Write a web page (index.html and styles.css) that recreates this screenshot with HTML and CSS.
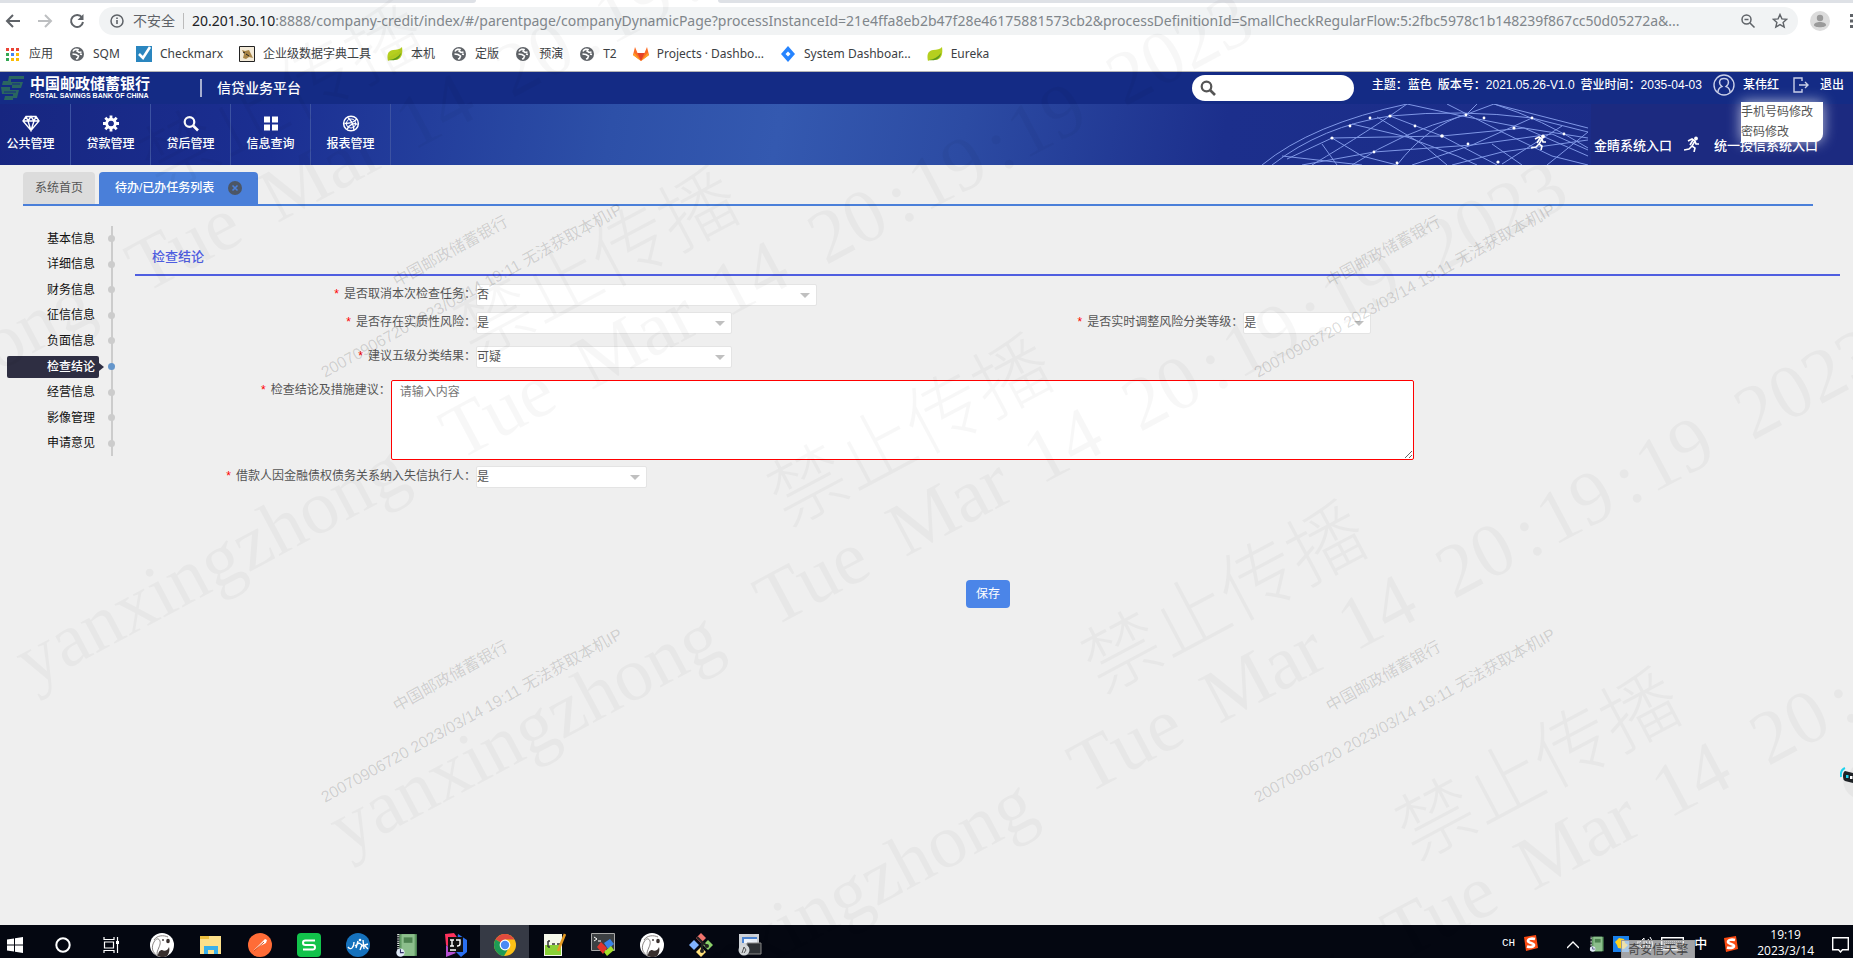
FILE: index.html
```html
<!DOCTYPE html>
<html lang="zh-CN">
<head>
<meta charset="utf-8">
<title>信贷业务平台</title>
<link rel="stylesheet" href="styles.css">
</head>
<body>
<svg class="defs" aria-hidden="true">
  <symbol id="globe" viewBox="0 0 16 16"><circle cx="8" cy="8" r="7" fill="#5f6368"/><path d="M4 5.500C5 3 8 3 9 3.500L8 5 10 6.500 12.500 6M3.500 8L7 8.500 9.500 10 8.500 12.500 7 13M11 8l2 .5" fill="none" stroke="#fff" stroke-width="1.600"/></symbol>
  <symbol id="leaf" viewBox="0 0 16 16"><path d="M15 1c1 6 0 13-7 13-3 0-5-.5-7 1C0 10 0 5 6 4c4-.6 7-.5 9-3z" fill="#b5cf1f"/><path d="M2 14c5-.5 9-3 12-7-1 6-5 8-12 7z" fill="#5c9a1d"/></symbol>
  <symbol id="search" viewBox="0 0 16 16"><circle cx="6.500" cy="6.500" r="4.800" fill="none" stroke="currentColor" stroke-width="2.200"/><path d="M10 10l5 5" stroke="currentColor" stroke-width="2.600"/></symbol>
  <symbol id="runner" viewBox="0 0 16 16"><circle cx="12" cy="2.500" r="1.900" fill="#fff"/><path d="M4 5l4-2 3 2-3 5 3 2-1 4M8 10l-3 3-5 1M11 5l1 3 3 0M9 4L6 9" fill="none" stroke="#fff" stroke-width="1.600"/></symbol>
  <symbol id="dog" viewBox="0 0 24 24"><circle cx="12" cy="12" r="12" fill="#fff"/><path d="M4 7C7 2 14 2 18 4" fill="none" stroke="#8a8482" stroke-width="1"/><path d="M4 9c2-4 5-4 6-1 1 4-2 7-3 12l1 3C2 20 1 14 4 9z" fill="#fff" stroke="#6b6462" stroke-width=".8"/><path d="M8 23c0-4 2-6 4-6 3 2 6 0 7-3 1 3 0 7-2 9-3 1.500-6 1.500-9 0z" fill="#382f2d"/><ellipse cx="18" cy="8" rx="1.800" ry="2.200" fill="#382f2d"/><circle cx="13" cy="7" r=".9" fill="#382f2d"/></symbol>
  <symbol id="sogou" viewBox="0 0 16 16"><path d="M1 2L13 0l2 13L3 16z" fill="#fb4a12"/><path d="M12 4C8 3 5 4 5 6s6 2 6 4-4 2.500-7 1.500" fill="none" stroke="#fff" stroke-width="2.600"/></symbol>
  <symbol id="book" viewBox="0 0 20 22"><path d="M3 1h16v20H3z" fill="#5f9a62"/><path d="M5 1h12v20H5z" fill="#8cbf8c"/><path d="M7 4h8v5H7z" fill="#4d8350"/><path d="M2 1v20" stroke="#dfe8df" stroke-width="2" stroke-dasharray="1 1"/><circle cx="4" cy="18" r="3.800" fill="#dfe9f5"/><path d="M4 15v3h3" fill="none" stroke="#336" stroke-width="1"/></symbol>
</svg>

<div class="browser">
  <div class="tabstrip"><span class="strip-left"></span><span class="strip-gap"></span><span class="strip-right"></span></div>
  <div class="toolbar">
    <button class="tool" aria-label="后退"><svg viewBox="0 0 16 16" width="16" height="16"><path d="M15 8H2M8 2L2 8l6 6" fill="none" stroke="#5f6368" stroke-width="2"/></svg></button>
    <button class="tool" aria-label="前进"><svg viewBox="0 0 16 16" width="16" height="16"><path d="M1 8h13M8 2l6 6-6 6" fill="none" stroke="#bdbfc1" stroke-width="2"/></svg></button>
    <button class="tool" aria-label="刷新"><svg viewBox="0 0 16 16" width="16" height="16"><path d="M13 4.500A6 6 0 1 0 14 9" fill="none" stroke="#5f6368" stroke-width="2"/><path d="M14.500 1v6h-6z" fill="#5f6368"/></svg></button>
    <div class="omnibox">
      <svg viewBox="0 0 16 16" width="16" height="16"><circle cx="8" cy="8" r="6" fill="none" stroke="#5f6368" stroke-width="1.500"/><path d="M8 7v4M8 4.500v1.500" stroke="#5f6368" stroke-width="1.600"/></svg>
      <span class="insecure">不安全</span>
      <div class="url" role="textbox" aria-label="地址"><span class="host">20.201.30.10</span>:8888/company-credit/index/#/parentpage/companyDynamicPage?processInstanceId=21e4ffa8eb2b47f28e46175881573cb2&amp;processDefinitionId=SmallCheckRegularFlow:5:2fbc5978c1b148239f867cc50d05272a&amp;...</div>
      <svg viewBox="0 0 16 16" width="16" height="16"><circle cx="6.500" cy="6.500" r="4.500" fill="none" stroke="#5f6368" stroke-width="1.500"/><path d="M10 10l4.500 4.500M4.500 6.500h4" stroke="#5f6368" stroke-width="1.500"/></svg>
      <svg viewBox="0 0 16 16" width="16" height="16"><path d="M8 1.500l1.900 4.400 4.800.4-3.600 3.100 1.100 4.700L8 11.600l-4.200 2.500 1.100-4.700L1.300 6.300l4.800-.4z" fill="none" stroke="#5f6368" stroke-width="1.400"/></svg>
    </div>
    <button class="avatar" aria-label="用户"><svg viewBox="0 0 20 20" width="20" height="20"><circle cx="10" cy="10" r="10" fill="#dcdcdc"/><circle cx="10" cy="7" r="3.200" fill="#9a9a9a"/><path d="M4 14c0-4 12-4 12 0 0 3-12 3-12 0z" fill="#9a9a9a"/></svg></button>
    <button class="kebab" aria-label="菜单"><svg viewBox="0 0 4 16" width="4" height="16"><path d="M0 1h4v3H0zM0 6.500h4v3H0zM0 12h4v3H0z" fill="#5f6368"/></svg></button>
  </div>
  <nav class="bookmarks">
    <a href="#"><svg viewBox="0 0 16 16"><path d="M1 2h3v3H1zM6 2h3v3H6z" fill="#ea4335"/><path d="M11 2h3v3h-3z" fill="#ea4335"/><path d="M1 7h3v3H1z" fill="#34a853"/><path d="M6 7h3v3H6z" fill="#4285f4"/><path d="M11 7h3v3h-3zM6 12h3v3H6zM11 12h3v3h-3z" fill="#fbbc05"/><path d="M1 12h3v3H1z" fill="#34a853"/></svg>应用</a>
    <a href="#"><svg><use href="#globe"/></svg>SQM</a>
    <a href="#"><svg viewBox="0 0 16 16"><path d="M0 0h16v16H0z" fill="#2a86bf"/><path d="M3 8l4 4 7-11" fill="none" stroke="#fff" stroke-width="2.600"/></svg>Checkmarx</a>
    <a href="#"><svg viewBox="0 0 16 16"><path d="M.5.500h15v15H.5z" fill="#f3ead8" stroke="#222"/><path d="M3 4l3 1 4-1 2 4 2 4-4-1-3 2-3-1 1-4z" fill="#a98547"/><path d="M4 6l2 1M7 8l3 2" stroke="#222"/></svg>企业级数据字典工具</a>
    <a href="#"><svg><use href="#leaf"/></svg>本机</a>
    <a href="#"><svg><use href="#globe"/></svg>定版</a>
    <a href="#"><svg><use href="#globe"/></svg>预演</a>
    <a href="#"><svg><use href="#globe"/></svg>T2</a>
    <a href="#"><svg viewBox="0 0 16 16"><path d="M8 15L0 9l2-8 2.500 6h7L14 1l2 8z" fill="#fc6d26"/><path d="M8 15L4.500 7h7z" fill="#e24329"/><path d="M0 9l8 6-6.500-8zM16 9l-8 6 6.500-8z" fill="#fca326"/></svg>Projects · Dashbo...</a>
    <a href="#"><svg viewBox="0 0 16 16"><path d="M8 0l7 8-7 8-7-8z" fill="#2684ff"/><path d="M8 5.500L10.500 8 8 10.500 5.500 8z" fill="#fff"/></svg>System Dashboar...</a>
    <a href="#"><svg><use href="#leaf"/></svg>Eureka</a>
  </nav>
</div>

<div class="app">
  <header class="topbar">
    <div class="logo">
      <svg viewBox="0 0 24 24" width="24" height="24"><path d="M9 0h15v3H11v3h12l-2 6h-9v-3H2l1-4h5zM1 11h9v3h9l-2 8h-4v2H4l1-4h8v-2H2z" fill="#2a6660"/><path d="M12 8h8M4 16h12" stroke="#142b85" stroke-width="1"/></svg>
      <div class="logo-text"><span class="logo-cn">中国邮政储蓄银行</span><span class="logo-en">POSTAL SAVINGS BANK OF CHINA</span></div>
    </div>
    <h1 class="platform">信贷业务平台</h1>
    <label class="search"><svg width="16" height="16"><use href="#search"/></svg><input type="text" aria-label="搜索"></label>
    <div class="info"><span>主题：蓝色</span><span>版本号：2021.05.26-V1.0</span><span>营业时间：2035-04-03</span></div>
    <div class="user">
      <svg viewBox="0 0 22 22" width="22" height="22"><circle cx="11" cy="11" r="10" fill="none" stroke="#c9cfe8" stroke-width="1.400"/><path d="M5 18c0-4 3-5 4-5.500-4-3-3-8 2-8s6 5 2 8c1 .5 4 1.500 4 5.500" fill="none" stroke="#c9cfe8" stroke-width="1.400"/></svg>
      <a href="#">某伟红</a>
      <div class="usermenu"><a href="#">手机号码修改</a><a href="#">密码修改</a></div>
    </div>
    <a class="logout" href="#"><svg viewBox="0 0 16 16" width="16" height="16"><path d="M9 4V1H1v14h8v-3M6 8h9M12 5l3 3-3 3" fill="none" stroke="#c9cfe8" stroke-width="1.400"/></svg>退出</a>
  </header>

  <div class="navbar">
    <nav class="mainnav">
      <a href="#"><svg viewBox="0 0 18 16" width="18" height="16"><path d="M4 1h10l3 4.500L9 15 1 5.500zM1 5.500h16M4 1l2 4.500L9 15l3-9.500L14 1M6 5.500L9 1l3 4.500" fill="none" stroke="#fff" stroke-width="1.400"/></svg>公共管理</a>
      <a href="#"><svg viewBox="0 0 16 16" width="16" height="16"><circle cx="8" cy="8" r="4.200" fill="none" stroke="#fff" stroke-width="3"/><path d="M8 0v4M8 12v4M0 8h4M12 8h4M2.300 2.300l3 3M10.700 10.700l3 3M2.300 13.700l3-3M10.700 5.300l3-3" stroke="#fff" stroke-width="2.800"/><circle cx="8" cy="8" r="2.600" fill="#1b2c8a"/></svg>贷款管理</a>
      <a href="#"><svg width="16" height="16"><use href="#search"/></svg>贷后管理</a>
      <a href="#"><svg viewBox="0 0 16 16" width="16" height="16"><path d="M1 1h6v6H1zM9 1h6v6H9zM1 9h6v6H1zM9 9h6v6H9z" fill="#fff"/></svg>信息查询</a>
      <a href="#"><svg viewBox="0 0 18 18" width="18" height="18"><circle cx="9" cy="9" r="7.800" fill="none" stroke="#fff" stroke-width="1.600"/><circle cx="9" cy="9" r="4.800" fill="none" stroke="#fff" stroke-width="1.200"/><path d="M6 3c4 4 6 8 6 13M2 9c6 0 11-1 13-5M5 15c2-5 7-7 11-5" fill="none" stroke="#fff" stroke-width="1.400"/></svg>报表管理</a>
    </nav>
    <svg class="mesh" viewBox="0 0 326 61" width="326" height="61" aria-hidden="true">
      <g fill="none" stroke="#7f97e6" stroke-width="1">
        <path d="M0 61Q50 20 145 0M10 61Q60 22 128 12Q200 5 270 14L326 28M50 61Q110 25 145 0M90 61Q140 28 200 12L232 0M135 61Q165 22 205 10L215 0M25 55L70 34 180 32 262 24 326 34M40 61L112 48 210 41 290 30 326 46M232 0Q280 15 326 44M190 61L240 48 326 36M115 13L160 40 185 61M128 12L180 32 235 61M200 12L262 24 326 52M70 34L100 52 135 61M90 20L145 33 195 52 215 61M270 14L210 41 150 61M300 22L240 60M326 28L285 61M145 0L200 12M232 0L326 24M185 0L240 28 290 52 326 61M60 40L75 61M260 61L230 40M20 52L100 61"/>
      </g>
      <g fill="#fff"><circle cx="70" cy="34" r="1.600"/><circle cx="88" cy="22" r="1.400"/><circle cx="108" cy="14" r="1.400"/><circle cx="128" cy="12" r="1.600"/><circle cx="153" cy="22" r="1.400"/><circle cx="180" cy="32" r="1.800"/><circle cx="204" cy="11" r="1.400"/><circle cx="222" cy="14" r="1.400"/><circle cx="252" cy="24" r="1.600"/><circle cx="270" cy="14" r="1.400"/><circle cx="302" cy="30" r="1.400"/><circle cx="112" cy="48" r="1.400"/><circle cx="135" cy="59" r="1.400"/><circle cx="236" cy="58" r="1.600"/><circle cx="206" cy="40" r="1.400"/></g>
    </svg>
    <svg class="runner first" width="16" height="16"><use href="#runner"/></svg>
    <div class="entries">
      <a href="#">金睛系统入口</a>
      <a href="#"><svg class="runner" width="16" height="16"><use href="#runner"/></svg>统一授信系统入口</a>
    </div>
  </div>

  <div class="pagetabs">
    <button class="pagetab">系统首页</button>
    <button class="pagetab active">待办/已办任务列表<svg viewBox="0 0 14 14" width="14" height="14"><circle cx="7" cy="7" r="7" fill="#4c5666"/><path d="M4.500 4.500l5 5M9.500 4.500l-5 5" stroke="#4a7fd9" stroke-width="1.600"/></svg></button>
  </div>

  <div class="workspace">
    <nav class="steps">
      <a href="#"><span>基本信息</span></a>
      <a href="#"><span>详细信息</span></a>
      <a href="#"><span>财务信息</span></a>
      <a href="#"><span>征信信息</span></a>
      <a href="#"><span>负面信息</span></a>
      <a href="#" class="current"><span>检查结论</span></a>
      <a href="#"><span>经营信息</span></a>
      <a href="#"><span>影像管理</span></a>
      <a href="#"><span>申请意见</span></a>
    </nav>
    <form class="panel">
      <h2>检查结论</h2>
      <div class="row tight">
        <label class="wide" for="f1"><i>*</i>是否取消本次检查任务：</label>
        <div class="pick w20"><select id="f1"><option>否</option><option>是</option></select></div>
      </div>
      <div class="row">
        <label class="wide" for="f2"><i>*</i>是否存在实质性风险：</label>
        <div class="pick w15"><select id="f2"><option>是</option><option>否</option></select></div>
        <label class="far" for="f3"><i>*</i>是否实时调整风险分类等级：</label>
        <div class="pick w7"><select id="f3"><option>是</option><option>否</option></select></div>
      </div>
      <div class="row">
        <label class="wide" for="f4"><i>*</i>建议五级分类结果：</label>
        <div class="pick w15"><select id="f4"><option>可疑</option></select></div>
      </div>
      <div class="row tight">
        <label class="narrow" for="f5"><i>*</i>检查结论及措施建议：</label>
        <textarea id="f5" placeholder="请输入内容"></textarea>
      </div>
      <div class="row">
        <label class="wide" for="f6"><i>*</i>借款人因金融债权债务关系纳入失信执行人：</label>
        <div class="pick w10"><select id="f6"><option>是</option><option>否</option></select></div>
      </div>
      <div class="actions"><button type="button">保存</button></div>
    </form>
  </div>
</div>

<footer class="taskbar">
  <button class="sys start" aria-label="开始"><svg viewBox="0 0 16 16" width="16" height="16"><path d="M0 2.500L7 1.500v6H0zM8 1.300L16 0v7.500H8zM0 8.500h7v6L0 13.500zM8 8.500h8V16l-8-1.200z" fill="#fff"/></svg></button>
  <button class="sys" aria-label="搜索"><svg viewBox="0 0 16 16" width="16" height="16"><circle cx="8" cy="8" r="6.700" fill="none" stroke="#fff" stroke-width="2"/></svg></button>
  <button class="sys" aria-label="任务视图"><svg viewBox="0 0 16 16" width="16" height="16"><path d="M1 0v2.500h10V0M1 16v-2.500h10V16M1.500 5h9v6h-9zM14.500 0v16" fill="none" stroke="#fff" stroke-width="1.200"/><path d="M13 4h3v3h-3z" fill="#fff"/></svg></button>
  <div class="programs">
    <button aria-label="DBeaver"><svg><use href="#dog"/></svg></button>
    <button aria-label="资源管理器"><svg viewBox="0 0 24 24"><path d="M1 3h21v18H1z" fill="#fde08a"/><path d="M1 3h9v3H1z" fill="#edbf3f"/><path d="M5 21v-8h14v8h-4v-4H9v4z" fill="#39b0ea"/></svg></button>
    <button aria-label="Postman"><svg viewBox="0 0 24 24"><circle cx="12" cy="12" r="12" fill="#ff6c37"/><path d="M5 18l8-8 4-4 2 1-1 3-6 3z" fill="#fff"/><path d="M6 18l10-9" stroke="#d4521f"/></svg></button>
    <button aria-label="WPS"><svg viewBox="0 0 24 24"><rect width="24" height="24" rx="4" fill="#12c34b"/><path d="M18 7.500H8.500Q6 7.500 6 9.700T8.500 12h7Q18 12 18 14.300T15.500 16.500H6" fill="none" stroke="#fff" stroke-width="2"/></svg></button>
    <button aria-label="工具"><svg viewBox="0 0 24 24"><circle cx="12" cy="12" r="12" fill="#1672bd"/><path d="M2 14c3 4 6 0 6-5M9 13l4-3 3 2-2 5M16 13l6-2M17 7l1 9M12 8l-2 7M18 12l4 4" fill="none" stroke="#fff" stroke-width="1.400"/><circle cx="14" cy="7" r="1.300" fill="#fff"/></svg></button>
    <button aria-label="手册"><svg><use href="#book"/></svg></button>
    <button aria-label="IntelliJ IDEA"><svg viewBox="0 0 24 24"><path d="M1 1l9-1 5 7-9 8-4-3z" fill="#fe315d"/><path d="M14 1l9 6v12l-6 5-5-5z" fill="#2a6ff0"/><path d="M2 12l10 8-10 4z" fill="#b44fd0"/><path d="M4 4h15v15H4z" fill="#111"/><path d="M6 7h4M8 7v6M6 13h4M12 7h4v4q0 2-3 2M6 17h6" fill="none" stroke="#fff" stroke-width="1.400"/></svg></button>
    <button class="open" aria-label="Chrome"><svg viewBox="0 0 24 24"><circle cx="12" cy="12" r="11" fill="#fbc116"/><path d="M12 12L2.500 6.500A11 11 0 0 1 21.500 6.500H12z" fill="#df4a3e"/><path d="M2.500 6.500A11 11 0 0 0 11 23l5-8.500-4-2.500z" fill="#1e9b55"/><circle cx="12" cy="12" r="5.400" fill="#fff"/><circle cx="12" cy="12" r="4.200" fill="#4a8af4"/></svg></button>
    <button aria-label="Notepad++"><svg viewBox="0 0 24 24"><path d="M2 1h18v22H2z" fill="#f4f7ea"/><path d="M3 12h16v10H3z" fill="#8ad136"/><path d="M6 8v6M10 11h3M15 11h3M6 8h2M6 14h2" stroke="#333" stroke-width="1.500"/><path d="M23 1l-7 17" stroke="#e69b22" stroke-width="2.600"/></svg></button>
    <button aria-label="Cmder"><svg viewBox="0 0 24 24"><path d="M.5.500h23v17H.5z" fill="#3d4043" stroke="#a8a8a8"/><path d="M3 4l3 2-3 2M7 8h3" fill="none" stroke="#fff"/><path d="M6 14l4-5 6 6-4 6z" fill="#e3342c"/><path d="M13 10l6-4 4 5-6 5z" fill="#3a83e8"/><path d="M13 19l7-6 3 4-7 6z" fill="#a6e12a"/></svg></button>
    <button aria-label="DBeaver"><svg><use href="#dog"/></svg></button>
    <button aria-label="Git"><svg viewBox="0 0 24 24"><path d="M12 0l5 5-5 5-5-5z" fill="#f0736d"/><path d="M5 7l5 5-5 5-5-5z" fill="#80b3ff"/><path d="M19 7l5 5-5 5-5-5z" fill="#8bd06a"/><path d="M12 14l5 5-5 5-5-5z" fill="#ffe07a"/><path d="M8 4l5 5v9M13 9l5 4" fill="none" stroke="#222" stroke-width="2.200"/><circle cx="13" cy="18" r="2" fill="#222"/><circle cx="18" cy="13" r="2" fill="#222"/></svg></button>
    <button aria-label="远程"><svg viewBox="0 0 24 24"><path d="M1 1h20v17H1z" fill="#cfd3d8"/><path d="M4 4h15v6H4z" fill="#4e87d6"/><path d="M6 6h13v4H6z" fill="#eef4fc"/><path d="M9 10h14v11H9z" fill="#2e3236" stroke="#888"/><circle cx="6" cy="17" r="5.500" fill="#d4d8da"/><path d="M4 20l2-6 2 3-2 3" fill="none" stroke="#555"/></svg></button>
  </div>
  <div class="lang"><span class="ch">CH</span><svg width="16" height="16"><use href="#sogou"/></svg></div>
  <div class="tray">
    <svg viewBox="0 0 12 16" width="12" height="16"><path d="M0 12l6-6 6 6" fill="none" stroke="#fff" stroke-width="1.400"/></svg>
    <svg width="16" height="16"><use href="#book"/></svg>
    <svg viewBox="0 0 16 16" width="16" height="16"><path d="M0 0h16v16H0z" fill="#1a80ea"/><path d="M2 6l4-4 5 1 1 4 3 2-4 4-6-1-1-3z" fill="#ffd21e"/></svg>
    <svg viewBox="0 0 16 16" width="16" height="16"><path d="M0 6h3l4-4v12l-4-4H0zM9 5q2 3 0 6M11 3q4 5 0 10M13 1q5 7 0 14" fill="none" stroke="#fff"/></svg>
    <svg viewBox="0 0 23 14" width="23" height="14"><path d="M.7.700h21.600v12H.7z" fill="none" stroke="#fff" stroke-width="1.400"/><path d="M3 4h17M3 7h17" stroke="#fff" stroke-dasharray="1 1"/><path d="M6 10h11" stroke="#fff"/></svg>
    <span class="ime">中</span>
    <svg width="16" height="16"><use href="#sogou"/></svg>
    <div class="tip">奇安信天擎</div>
  </div>
  <div class="clock"><span>19:19</span><span>2023/3/14</span></div>
  <svg class="notice" viewBox="0 0 17 16" width="17" height="16"><path d="M.7.700h15.600v12H10.500L8.500 15l-2-2.300H.7z" fill="none" stroke="#fff" stroke-width="1.400"/></svg>
</footer>

<svg class="robot" viewBox="0 0 13 30" width="13" height="30" aria-hidden="true"><path d="M3 12q0 12 10 18V0z" fill="#e6e6e6"/><path d="M1 10Q0 3 5 1" fill="none" stroke="#1fd3ee" stroke-width="2"/><path d="M5 4l8 2v10l-8-2q-2-1-2-5t2-5z" fill="#1e2226"/><path d="M6 8h2.500v3H6z" fill="#1fd3ee"/><path d="M10 9h2.500v3H10z" fill="#fff"/></svg>

<svg class="watermark" aria-hidden="true">
  <defs>
    <g id="mark-large">
      <g transform="rotate(-28)">
        <text x="-487" y="0">yanxingzhong</text><text x="-4" y="0">Tue</text><text x="146" y="0">Mar</text><text x="300" y="0">14</text><text x="412" y="0">20</text><text x="498" y="0">:</text><text x="525" y="0">19</text><text x="611" y="0">:</text><text x="637" y="0">19</text><text x="750" y="0">2023</text>
        <text class="cn" x="56" y="-82">禁止传播</text>
      </g>
    </g>
    <g id="mark-small">
      <g transform="rotate(-29)"><text x="0" y="0">20070906720 2023/03/14 19:11 无法获取本机IP</text></g>
      <g transform="translate(72 -91) rotate(-29)"><text x="0" y="0">中国邮政储蓄银行</text></g>
    </g>
  </defs>
  <g class="large">
    <use href="#mark-large" x="148" y="292"/><use href="#mark-large" x="462" y="459"/><use href="#mark-large" x="776" y="626"/><use href="#mark-large" x="1090" y="793"/><use href="#mark-large" x="1404" y="960"/>
  </g>
  <g class="small">
    <use href="#mark-small" x="325" y="378"/><use href="#mark-small" x="1258" y="378"/><use href="#mark-small" x="325" y="803"/><use href="#mark-small" x="1258" y="803"/>
  </g>
</svg>
</body>
</html>
```
FILE: styles.css
```css
* { box-sizing: border-box; }

body {
  margin: 0;
  height: 100vh;
  display: flex;
  flex-direction: column;
  position: relative;
  overflow: hidden;
  background: #efefef;
  color: #555;
  font: 12px/20px "Liberation Sans", "Noto Sans CJK SC", sans-serif;
}

a { color: inherit; text-decoration: none; }
button, input, select, textarea { font: inherit; color: inherit; }
button { border: 0; padding: 0; background: none; }
svg { flex: none; display: block; }
.defs { position: absolute; width: 0; height: 0; }

/* browser chrome */
.browser { background: #fff; border-bottom: 1px solid #b5b5b5; font-family: "Noto Sans", "Noto Sans CJK SC", sans-serif; }
.tabstrip { display: flex; height: 3px; }
.strip-left { width: 476px; background: #dee1e6; border-bottom-right-radius: 4px; }
.strip-gap { width: 242px; }
.strip-right { flex: 1; background: #dee1e6; border-bottom-left-radius: 4px; }
.toolbar { display: flex; align-items: center; height: 36px; padding-left: 5px; gap: 16px; overflow: hidden; }
.omnibox { flex: 1; display: flex; align-items: center; height: 28px; margin-left: -2px; padding: 0 10px; border-radius: 14px; background: #f1f3f4; gap: 16px; color: #80868b; font-size: 14px; min-width: 0; }
.insecure { margin-left: -8px; padding-right: 8px; border-right: 1px solid #bbb; line-height: 16px; color: #5f6368; white-space: nowrap; }
.url { flex: 1; margin-left: -8px; white-space: nowrap; overflow: hidden; }
.host { color: #202124; }
.avatar { margin-left: -4px; }
.kebab { margin-right: -1px; margin-left: 4px; }
.bookmarks { display: flex; align-items: center; height: 32px; gap: 16px; padding: 0 0 2px 5px; color: #3c4043; }
.bookmarks a { display: flex; align-items: center; gap: 8px; white-space: nowrap; }
.bookmarks svg { width: 16px; height: 16px; }

/* application header */
.app { flex: 1; min-height: 0; }
.topbar { display: flex; align-items: center; height: 32px; padding-right: 9px; background: #142b85; color: #fff; font-weight: 500; white-space: nowrap; }
.logo { display: flex; align-items: center; gap: 6px; width: 200px; }
.logo-text { display: flex; flex-direction: column; }
.logo-cn { font-size: 15px; line-height: 16px; font-weight: 700; }
.logo-en { font-size: 7px; line-height: 8px; font-weight: 700; }
.platform { margin: 0; padding-left: 15px; border-left: 2px solid #a6afd0; font-size: 14px; line-height: 18px; font-weight: 500; }
.search { display: flex; align-items: center; width: 162px; height: 26px; margin-left: auto; padding: 0 8px; border-radius: 13px; background: #fff; color: #555; }
.search input { flex: 1; min-width: 0; border: 0; background: none; outline: 0; }
.info { display: flex; gap: 6px; margin: 0 11px 6px 18px; }
.user { position: relative; display: flex; align-items: center; gap: 8px; margin-bottom: 6px; }
.logout { display: flex; align-items: center; gap: 11px; margin: 0 0 6px 14px; }
.usermenu { position: absolute; z-index: 2; top: 28px; left: 28px; width: 82px; background: #fff; color: #555; font-weight: 400; border-radius: 0 0 8px 0; box-shadow: 0 0 14px rgba(255, 255, 255, .7); }
.usermenu a { display: block; }

.navbar { display: flex; height: 61px; color: #fff; font-weight: 500; background: linear-gradient(100deg, #172680 0, #1b2f92 15%, #2d50a8 33%, #3459b0 42%, #2c4ba3 52%, #1c2f8c 66%, #1b2a84 100%); }
.mainnav { display: flex; }
.mainnav a { display: flex; flex-direction: column; align-items: center; justify-content: center; gap: 2px; width: 80px; border-right: 1px solid #3c52a2; }
.mainnav a:first-child { width: 71px; padding-right: 9px; }
.mainnav svg { height: 17px; }
.mesh { margin-left: auto; }
.runner.first { margin: 30px 44px 0 -57px; }
.entries { display: flex; width: 262px; padding: 32px 0 0 3px; gap: 12px; background: #1c2a80; font-size: 13px; white-space: nowrap; }
.entries a { display: flex; gap: 14px; }

/* page tabs */
.pagetabs { display: flex; gap: 4px; margin: 7px 40px 0 23px; border-bottom: 2px solid #4a7fd9; }
.pagetab { height: 32px; padding: 0 12px; border-radius: 4px 4px 0 0; background: #dcdcdc; }
.pagetab.active { display: flex; align-items: center; gap: 14px; padding: 0 16px; background: #4a7fd9; color: #fff; font-weight: 500; }

/* left step list */
.workspace { display: flex; padding-right: 13px; }
.steps { position: relative; display: grid; grid-template-rows: repeat(9, 1fr); width: 113px; height: 230px; margin: 20px 22px 0 0; padding-left: 7px; border-right: 2px solid #ccc; color: #111; }
.steps a { position: relative; display: flex; align-items: center; }
.steps span { position: relative; width: 92px; padding-right: 4px; line-height: 22px; border-radius: 2px; text-align: right; }
.steps a::after { content: ""; position: absolute; right: -4px; width: 7px; height: 7px; border-radius: 50%; background: #ccc; }
.steps .current span { background: #2e2e42; color: #fff; font-weight: 500; }
.steps .current span::after { content: ""; position: absolute; left: 100%; top: 7px; border: 4px solid transparent; border-left: 5px solid #2e2e42; border-right: 0; }
.steps .current::after { background: #6596cb; }

/* form */
.panel { flex: 1; }
.panel h2 { margin: 0 0 8px; padding: 40px 0 6px 17px; border-bottom: 2px solid #4f5ee0; color: #4f5ee0; font-size: 13px; line-height: 22px; font-weight: 500; }
.row { display: flex; margin-bottom: 12px; }
.row.tight { margin-bottom: 6px; }
.row label { text-align: right; white-space: nowrap; }
.row i { margin-right: 5px; color: #f00; font-style: normal; }
.wide { width: 20%; }
.narrow { width: 15%; }
.far { width: 30%; }
.w20 { width: 20%; }
.w15 { width: 15%; }
.w10 { width: 10%; }
.w7 { width: 7.5%; }
.pick { position: relative; height: 22px; }
.pick::after { content: ""; position: absolute; right: 7px; top: 9px; border: 5px solid transparent; border-top-color: #c0c0c0; border-bottom: 0; pointer-events: none; }
.pick select { display: block; width: 100%; height: 22px; padding: 0; border: 1px solid #e4e4e4; border-radius: 2px; background: #fff; appearance: none; }
textarea { display: block; width: 60%; height: 80px; padding: 1px 8px; border: 1px solid #f00; border-radius: 2px; background: #fff; }
textarea::placeholder { color: #777; }
.actions { display: flex; padding: 80px 0 0 831px; }
.actions button { padding: 4px 10px; border-radius: 4px; background: #4b85e8; color: #fff; }

/* task bar */
.taskbar { display: flex; height: 33px; background: #040711; color: #fff; white-space: nowrap; }
.sys { display: flex; justify-content: center; width: 48px; padding-top: 12px; }
.start { width: 39px; padding-right: 9px; }
.programs { display: flex; margin-left: 2px; }
.programs button { display: flex; justify-content: center; width: 49px; height: 33px; padding-top: 8px; }
.programs svg { width: 24px; height: 24px; }
.programs .open { background: #363a45; }
.lang { display: flex; align-items: center; gap: 8px; margin-left: auto; height: 36px; }
.ch { font-family: "Liberation Mono", monospace; font-size: 11px; }
.tray { position: relative; display: flex; align-items: center; gap: 8px; height: 38px; margin-left: 28px; }
.tray svg:first-child { margin-right: 2px; }
.ime { margin: 0 8px 0 2px; font-size: 13px; font-weight: 500; }
.tip { position: absolute; left: 54px; top: 15px; width: 74px; padding-left: 6px; border: 1px solid #999; background: rgba(230, 230, 230, .7); color: #444; line-height: 18px; }
.clock { display: flex; flex-direction: column; align-items: center; margin: 2px 18px 0 18px; font: 12px/16px "Open Sans", sans-serif; }
.notice { margin: 12px 4px 0 0; }

/* overlays */
.robot { position: absolute; right: 0; top: 767px; }
.watermark { position: absolute; inset: 0; width: 100%; height: 100%; pointer-events: none; }
.large { fill: rgba(0, 0, 0, .033); font: 76px "Liberation Serif", serif; }
.cn { font: 300 77px "Noto Sans CJK SC", sans-serif; }
.small { fill: rgba(0, 0, 0, .15); font: 16px "Liberation Sans", "Noto Sans CJK SC", sans-serif; }
```
